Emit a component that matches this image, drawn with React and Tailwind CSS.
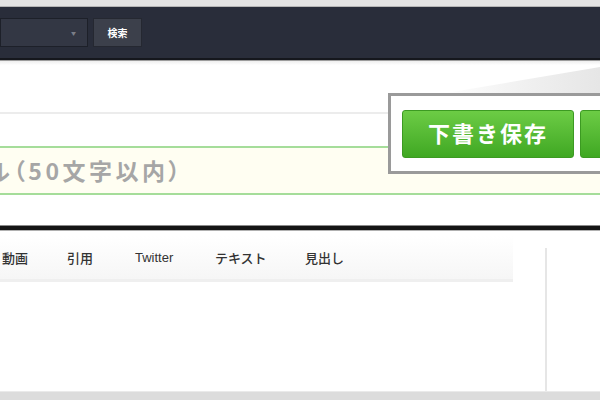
const TABS = [
  { label: "動画", w: "w-[65px]" },
  { label: "引用", w: "w-[68px]" },
  { label: "Twitter", w: "w-[80px]" },
  { label: "テキスト", w: "w-[90px]" },
  { label: "見出し", w: "w-[60px]" }
];

const jp = "font-['Noto_Sans_CJK_JP','Noto_Sans',sans-serif]";

export default function App() {
  return (
    <div className={`w-[600px] h-[400px] overflow-hidden bg-white flex flex-col ${jp}`}>
      {/* top strip */}
      <div className="h-[7px] bg-[#e3e3e3] border-b border-[#b5b5b5]" />

      {/* dark nav */}
      <div className="h-[53px] bg-[#292d3a] border-b-2 border-[#15171d] flex items-center gap-[5px]">
        <div className="w-[88px] h-[29px] bg-[#333744] border border-[#1d2029] flex items-center justify-end pr-[11px]">
          <span className="text-[5px] leading-none text-[#7b7e88]">▼</span>
        </div>
        <button className="w-[49px] h-[29px] bg-[#3c404b] border border-[#252831] text-white text-[10px] font-bold leading-none">
          検索
        </button>
      </div>
      <div className="h-[1px] bg-[#9c9c9c]" />

      {/* title area */}
      <div className="relative h-[164px] bg-white">
        <div className="h-[4px] bg-gradient-to-b from-[#eeeeee] to-white" />
        <div className="mt-[47px] h-[2px] w-[390px] bg-[#ececec]" />
        <div className="mt-[32px] h-[49px] border-y-2 border-[#a5dd9a] bg-[#fffef2] overflow-hidden flex items-center">
          <span className="-ml-[84px] whitespace-nowrap text-[23px] font-bold text-[#a6a6a6] leading-none tracking-[3.5px] [font-feature-settings:'palt']">
            タイトル（50文字以内）
          </span>
        </div>

        {/* shading behind popup */}
        <div className="absolute left-[440px] top-[6px] w-[160px] h-[27px] bg-gradient-to-r from-white via-[#f1f1f1] to-[#e6e6e6] [clip-path:polygon(100%_0,100%_100%,0_100%)]" />

        {/* save popup */}
        <div className="absolute left-[388px] top-[32px] w-[240px] h-[81px] border-[3px] border-[#9a9a9a] bg-white flex items-center gap-[6px] pl-[11px]">
          <button className="w-[172px] h-[48px] shrink-0 rounded-[3px] border border-[#3c9a22] bg-gradient-to-b from-[#6ccc45] to-[#3fa822] text-white text-[22px] font-bold leading-none tracking-[2px] pb-[3px]">
            下書き保存
          </button>
          <button className="w-[80px] h-[48px] shrink-0 rounded-[3px] border border-[#3c9a22] bg-gradient-to-b from-[#6ccc45] to-[#3fa822]" />
        </div>
      </div>

      {/* thick rule */}
      <div className="h-[1px] bg-[#8a8a8a]" />
      <div className="h-[4px] bg-[#151515]" />
      <div className="h-[1px] bg-[#b0b0b0]" />

      {/* editor area */}
      <div className="flex-1 flex">
        <div className="w-[545px] flex flex-col">
          <div className="w-[513px] h-[46px] mt-[5px] bg-gradient-to-b from-white to-[#f6f6f6] border-b-[3px] border-[#efefef] flex items-center pl-[2px] text-[13px] text-[#333] font-medium">
            {TABS.map((t) => (
              <span
                key={t.label}
                className={`${t.w} shrink-0 ${t.label === "Twitter" ? "font-['Liberation_Sans',sans-serif] text-[13px]" : ""}`}
              >
                {t.label}
              </span>
            ))}
          </div>
        </div>
        <div className="w-[2px] mt-[17px] bg-[#e6e6e6]" />
        <div className="flex-1" />
      </div>

      {/* bottom strip */}
      <div className="h-[9px] bg-[#dcdcdc] border-t border-[#eaeaea]" />
    </div>
  );
}
